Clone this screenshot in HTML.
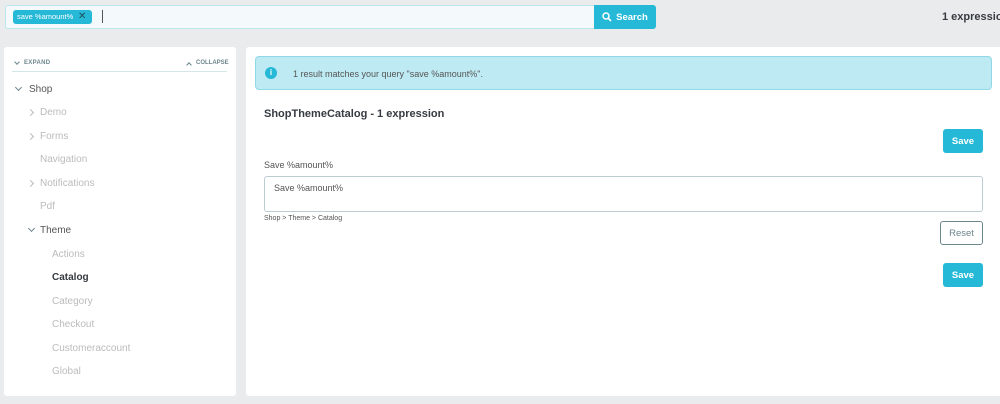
<!DOCTYPE html>
<html><head><style>
*{box-sizing:border-box;margin:0;padding:0}
body{width:1000px;height:404px;background:#eaebec;font-family:"Liberation Sans",sans-serif;position:relative;overflow:hidden;color:#363a41}
.a{position:absolute}
.t{font-size:10px;white-space:nowrap}
.chev{position:absolute;width:5px;height:5px;border-right:1.2px solid #6c868e;border-bottom:1.2px solid #6c868e}
.btn{position:absolute;background:#25b9d7;color:#fff;font-size:9.5px;font-weight:bold;border-radius:3px;display:flex;align-items:center;justify-content:center}
</style></head><body>
<div class="a" style="left:5px;top:5px;width:590px;height:24px;background:#f4fafc;border:1px solid #bde5ee;border-radius:3px 0 0 3px"></div>
<div class="a" style="left:13px;top:10px;width:79px;height:14px;background:#25b9d7;border-radius:3px;color:#fff;font-size:7.5px;line-height:14px;padding-left:4px">save %amount%<span style="position:absolute;left:65px;top:0;color:#1d4f5a;font-size:10px">✕</span></div>
<div class="a" style="left:102px;top:10px;width:1px;height:13px;background:#555"></div>
<div class="btn" style="left:594px;top:5px;width:62px;height:24px;border-radius:0 3px 3px 0">
<svg width="10" height="10" viewBox="0 0 10 10" style="margin-right:4px"><circle cx="4" cy="4" r="3" fill="none" stroke="#fff" stroke-width="1.5"/><path d="M6.2 6.2L9 9" stroke="#fff" stroke-width="1.6"/></svg>Search</div>
<div class="a t" style="left:942px;top:11px;font-size:11px;color:#363a41;font-weight:bold">1 expression</div>

<div class="a" style="left:4px;top:47px;width:232px;height:349px;background:#fff;border-radius:3px"></div>
<div class="chev" style="left:15px;top:60px;width:4px;height:4px;transform:rotate(45deg)"></div>
<div class="a t" style="left:24px;top:60px;font-size:6px;font-weight:bold;color:#6c868e;letter-spacing:.3px">EXPAND</div>
<div class="chev" style="left:187px;top:63px;width:4px;height:4px;transform:rotate(-135deg)"></div>
<div class="a t" style="left:196px;top:60px;font-size:6px;font-weight:bold;color:#6c868e;letter-spacing:0">COLLAPSE</div>
<div class="a" style="left:12px;top:71px;width:215px;height:1px;background:#d5e6ea"></div>

<div class="chev" style="left:16px;top:85px;transform:rotate(45deg)"></div>
<div class="a t" style="left:29px;top:84px;color:#555">Shop</div>
<div class="chev" style="left:28px;top:110px;transform:rotate(-45deg);border-color:#bbb"></div>
<div class="a t" style="left:40px;top:107px;color:#bbb">Demo</div>
<div class="chev" style="left:28px;top:134px;transform:rotate(-45deg);border-color:#bbb"></div>
<div class="a t" style="left:40px;top:131px;color:#bbb">Forms</div>
<div class="a t" style="left:40px;top:154px;color:#bbb">Navigation</div>
<div class="chev" style="left:28px;top:181px;transform:rotate(-45deg);border-color:#bbb"></div>
<div class="a t" style="left:40px;top:178px;color:#bbb">Notifications</div>
<div class="a t" style="left:40px;top:201px;color:#bbb">Pdf</div>
<div class="chev" style="left:29px;top:226px;transform:rotate(45deg)"></div>
<div class="a t" style="left:40px;top:225px;color:#555">Theme</div>
<div class="a t" style="left:52px;top:249px;color:#bbb">Actions</div>
<div class="a t" style="left:52px;top:272px;color:#363a41;font-weight:bold">Catalog</div>
<div class="a t" style="left:52px;top:296px;color:#bbb">Category</div>
<div class="a t" style="left:52px;top:319px;color:#bbb">Checkout</div>
<div class="a t" style="left:52px;top:343px;color:#bbb">Customeraccount</div>
<div class="a t" style="left:52px;top:366px;color:#bbb">Global</div>

<div class="a" style="left:246px;top:47px;width:760px;height:349px;background:#fff;border-radius:3px"></div>
<div class="a" style="left:255px;top:56px;width:737px;height:34px;background:#beeaf3;border:1px solid #8fd8e8;border-radius:4px"></div>
<div class="a" style="left:265px;top:67px;width:12px;height:12px;border-radius:50%;background:#25b9d7;color:#fff;font-size:8px;font-weight:bold;text-align:center;line-height:12px">i</div>
<div class="a t" style="left:293px;top:69px;font-size:9px;color:#555">1 result matches your query "save %amount%".</div>
<div class="a t" style="left:264px;top:108px;font-size:11px;font-weight:bold;color:#363a41">ShopThemeCatalog - 1 expression</div>
<div class="btn" style="left:943px;top:129px;width:40px;height:24px">Save</div>
<div class="a t" style="left:264px;top:160px;font-size:9px;color:#555">Save %amount%</div>
<div class="a" style="left:264px;top:176px;width:719px;height:36px;border:1px solid #bbcdd2;border-radius:3px"></div>
<div class="a t" style="left:274px;top:183px;font-size:9px;color:#555">Save %amount%</div>
<div class="a t" style="left:264px;top:215px;font-size:7px;color:#555">Shop &gt; Theme &gt; Catalog</div>
<div class="a" style="left:940px;top:221px;width:43px;height:24px;border:1px solid #6c868e;border-radius:3px;font-size:9.5px;color:#6c868e;display:flex;align-items:center;justify-content:center">Reset</div>
<div class="btn" style="left:943px;top:263px;width:40px;height:24px">Save</div>
</body></html>
